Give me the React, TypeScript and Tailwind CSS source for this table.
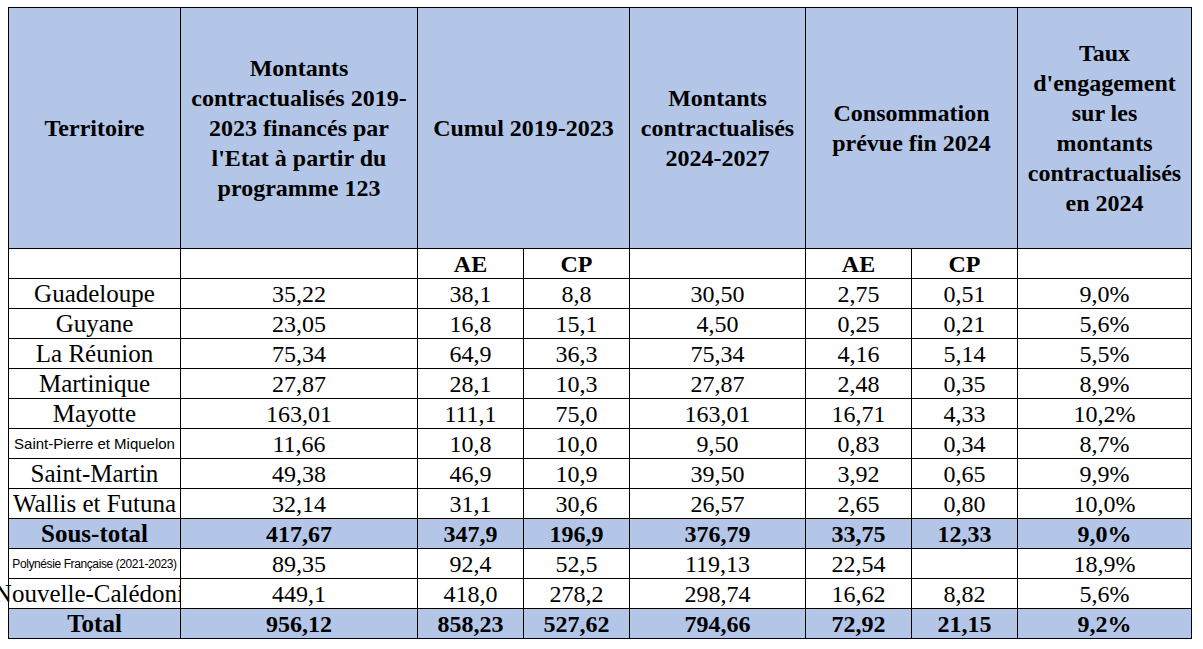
const rows = [
  { name: "Guadeloupe", a: "35,22", ae: "38,1", cp: "8,8", m: "30,50", cae: "2,75", ccp: "0,51", t: "9,0%" },
  { name: "Guyane", a: "23,05", ae: "16,8", cp: "15,1", m: "4,50", cae: "0,25", ccp: "0,21", t: "5,6%" },
  { name: "La Réunion", a: "75,34", ae: "64,9", cp: "36,3", m: "75,34", cae: "4,16", ccp: "5,14", t: "5,5%" },
  { name: "Martinique", a: "27,87", ae: "28,1", cp: "10,3", m: "27,87", cae: "2,48", ccp: "0,35", t: "8,9%" },
  { name: "Mayotte", a: "163,01", ae: "111,1", cp: "75,0", m: "163,01", cae: "16,71", ccp: "4,33", t: "10,2%" },
  { name: "Saint-Pierre et Miquelon", small: "sp", a: "11,66", ae: "10,8", cp: "10,0", m: "9,50", cae: "0,83", ccp: "0,34", t: "8,7%" },
  { name: "Saint-Martin", a: "49,38", ae: "46,9", cp: "10,9", m: "39,50", cae: "3,92", ccp: "0,65", t: "9,9%" },
  { name: "Wallis et Futuna", a: "32,14", ae: "31,1", cp: "30,6", m: "26,57", cae: "2,65", ccp: "0,80", t: "10,0%" },
  { name: "Sous-total", total: true, a: "417,67", ae: "347,9", cp: "196,9", m: "376,79", cae: "33,75", ccp: "12,33", t: "9,0%" },
  { name: "Polynésie Française (2021-2023)", small: "pf", a: "89,35", ae: "92,4", cp: "52,5", m: "119,13", cae: "22,54", ccp: "", t: "18,9%" },
  { name: "Nouvelle-Calédonie", a: "449,1", ae: "418,0", cp: "278,2", m: "298,74", cae: "16,62", ccp: "8,82", t: "5,6%" },
  { name: "Total", total: true, a: "956,12", ae: "858,23", cp: "527,62", m: "794,66", cae: "72,92", ccp: "21,15", t: "9,2%" },
];

const head =
  "flex items-center justify-center text-center bg-[#b4c6e7] font-bold leading-[30px] whitespace-nowrap";
const sub = "flex items-center justify-center bg-white font-bold leading-[28px]";

export default function App() {
  return (
    <div className="min-h-screen bg-white pl-[8px] pt-[7px] text-black text-[24px]">
      <div
        className={[
          "grid w-[1184px] gap-px bg-black p-px",
          "grid-cols-[171px_236px_105px_105px_175px_105px_105px_173px]",
          "grid-rows-[240px_repeat(13,29px)]",
          "font-['Liberation_Serif']",
        ].join(" ")}
      >
        <div className={head}>Territoire</div>
        <div className={head}>
          Montants
          <br />
          contractualisés 2019-
          <br />
          2023 financés par
          <br />
          l&#39;Etat à partir du
          <br />
          programme 123
        </div>
        <div className={head + " col-span-2"}>Cumul 2019-2023</div>
        <div className={head}>
          Montants
          <br />
          contractualisés
          <br />
          2024-2027
        </div>
        <div className={head + " col-span-2"}>
          Consommation
          <br />
          prévue fin 2024
        </div>
        <div className={head}>
          Taux
          <br />
          d&#39;engagement
          <br />
          sur les
          <br />
          montants
          <br />
          contractualisés
          <br />
          en 2024
        </div>

        <div className="bg-white" />
        <div className="bg-white" />
        <div className={sub}>AE</div>
        <div className={sub}>CP</div>
        <div className="bg-white" />
        <div className={sub}>AE</div>
        <div className={sub}>CP</div>
        <div className="bg-white" />

        {rows.map((r) => {
          const c = [
            "flex items-center justify-center whitespace-nowrap leading-[28px]",
            r.total ? "bg-[#b4c6e7] font-bold" : "bg-white",
          ].join(" ");
          return [
            <div key={r.name + "-n"} className={c}>
              {r.small === "sp" ? (
                <span className="font-['Liberation_Sans'] text-[15px]">{r.name}</span>
              ) : r.small === "pf" ? (
                <span className="font-['Liberation_Sans'] text-[12px] tracking-[-0.4px]">{r.name}</span>
              ) : (
                <span className="text-[25px]">{r.name}</span>
              )}
            </div>,
            <div key={r.name + "-a"} className={c}>{r.a}</div>,
            <div key={r.name + "-ae"} className={c}>{r.ae}</div>,
            <div key={r.name + "-cp"} className={c}>{r.cp}</div>,
            <div key={r.name + "-m"} className={c}>{r.m}</div>,
            <div key={r.name + "-cae"} className={c}>{r.cae}</div>,
            <div key={r.name + "-ccp"} className={c}>{r.ccp}</div>,
            <div key={r.name + "-t"} className={c}>{r.t}</div>,
          ];
        })}
      </div>
    </div>
  );
}
